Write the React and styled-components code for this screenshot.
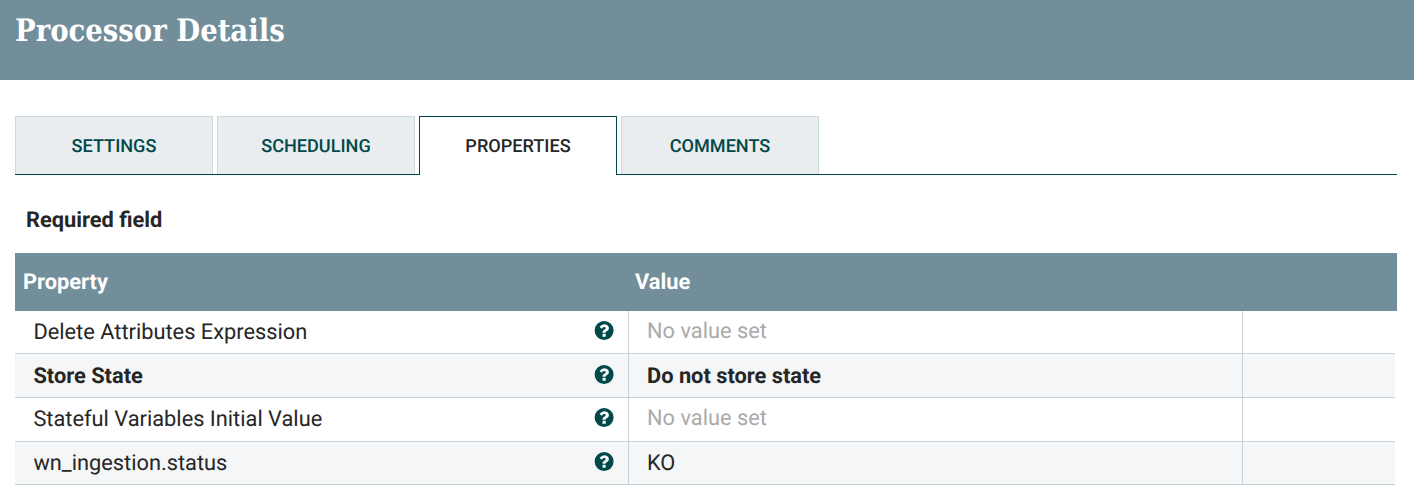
import React from "react";
import styled, { createGlobalStyle } from "styled-components";

const GlobalStyle = createGlobalStyle`
  * { box-sizing: border-box; }
  body {
    margin: 0;
    background: #fff;
    color: #262626;
    font-family: Roboto, "Liberation Sans", sans-serif;
    font-size: 21.8px;
    text-rendering: geometricPrecision;
    overflow: hidden;
  }
`;

const Dialog = styled.div`
  height: 500px;
  background: #fff;
`;

const Header = styled.header`
  height: 80px;
  padding: 11px 15px 0;
  background: #728e9b;
`;

const Title = styled.h1`
  margin: 0;
  color: #fff;
  font: 700 31px/40px "Roboto Slab", "DejaVu Serif Condensed", "DejaVu Serif", serif;
  font-stretch: condensed;
  width: max-content;
  transform-origin: 0 50%;
  transform: scaleX(0.987);
  white-space: nowrap;
`;

const Content = styled.main`
  padding: 36px 17px 0 15px;
`;

const TabBar = styled.nav`
  display: flex;
  gap: 4px;
  height: 59px;
  box-shadow: inset 0 -1px #004849;
`;

const Tab = styled.div`
  display: flex;
  align-items: center;
  justify-content: center;
  width: 198px;
  height: ${(p) => (p.$active ? 59 : 58)}px;
  padding-top: ${(p) => (p.$active ? 1 : 2)}px;
  border: 1px solid ${(p) => (p.$active ? "#004849" : "#ccdadb")};
  border-bottom: 0;
  background: ${(p) => (p.$active ? "#fff" : "#e9edef")};
  color: ${(p) => (p.$active ? "#262626" : "#004849")};
  font-size: 18.1px;
  font-weight: 500;
  text-transform: uppercase;
`;

const RequiredNote = styled.div`
  height: 78px;
  padding: 31px 11px 0;
  font-weight: 700;
  line-height: 29px;
`;

const HeadRow = styled.div`
  display: grid;
  grid-template-columns: 612px 1fr;
  align-items: center;
  height: 58px;
  padding: 0 0 0 8px;
  background: #728e9b;
  color: #fff;
  font-weight: 700;
`;

const Rows = styled.div`
  margin-right: 2px;
`;

const Row = styled.div`
  display: grid;
  grid-template-columns: 614px 614px 1fr;
  height: ${(p) => p.$height}px;
  border-bottom: 1px solid #c7d2d7;
  font-weight: ${(p) => (p.$required ? 700 : 400)};
  &:nth-child(even) { background: #f4f6f7; }
`;

const Cell = styled.div`
  display: flex;
  align-items: center;
  justify-content: space-between;
  padding: ${(p) => (p.$raised ? 0 : 1)}px 14px ${(p) => (p.$raised ? 1 : 0) + (p.$muted ? 2 : 0)}px 18px;
  color: ${(p) => (p.$muted ? "#aaa" : "#262626")};
  white-space: nowrap;
  &:first-child { padding-left: 18.4px; }
  &:not(:last-child) { border-right: 1px solid #c7d2d7; }
`;

const HelpIcon = styled.svg`
  display: block;
  align-self: flex-start;
  width: 20px;
  height: 20px;
  margin-top: ${(p) => p.$top}px;
  fill: #004849;
`;

const Help = ({ top }) => (
  <HelpIcon $top={top} viewBox="-50 0 1617 1617" aria-label="Help">
    <path
      fillRule="evenodd"
      d="M896 1248v-192q0-14-9-23t-23-9h-192q-14 0-23 9t-9 23v192q0 14 9 23t23 9h192q14 0 23-9t9-23zM1152 576q0-88-55.5-163t-138.5-116-170-41q-243 0-371 213-15 24 8 42l132 100q7 6 19 6 16 0 25-12 53-68 86-92 34-24 86-24 48 0 85.5 26t37.5 59q0 38-20 61t-68 45q-63 28-115.5 86.5t-52.5 125.5v36q0 14 9 23t23 9h192q14 0 23-9t9-23q0-19 21.5-49.5t54.5-49.5q32-18 49-28.500t46-35 44.5-48 28-60.500 12.500-81zM1536 768A768 768 0 1 1 0 768A768 768 0 1 1 1536 768z"
    />
  </HelpIcon>
);

const tabs = ["Settings", "Scheduling", "Properties", "Comments"];

const properties = [
  { name: "Delete Attributes Expression", height: 43 },
  { name: "Store State", value: "Do not store state", required: true, height: 44 },
  { name: "Stateful Variables Initial Value", raised: true, height: 44 },
  { name: "wn_ingestion.status", value: "KO", height: 43 },
];

export default function App() {
  return (
    <Dialog>
      <GlobalStyle />
      <Header>
        <Title>Processor Details</Title>
      </Header>
      <Content>
        <TabBar>
          {tabs.map((t) => (
            <Tab key={t} $active={t === "Properties"}>{t}</Tab>
          ))}
        </TabBar>
        <RequiredNote>Required field</RequiredNote>
        <HeadRow>
          <span>Property</span>
          <span>Value</span>
        </HeadRow>
        <Rows>
          {properties.map((p) => (
            <Row key={p.name} $required={p.required} $height={p.height}>
              <Cell $raised={p.raised}>
                <span>{p.name}</span>
                <Help top={p.height - 34} />
              </Cell>
              <Cell $raised={p.raised} $muted={!p.value}>{p.value || "No value set"}</Cell>
              <Cell />
            </Row>
          ))}
        </Rows>
      </Content>
    </Dialog>
  );
}
